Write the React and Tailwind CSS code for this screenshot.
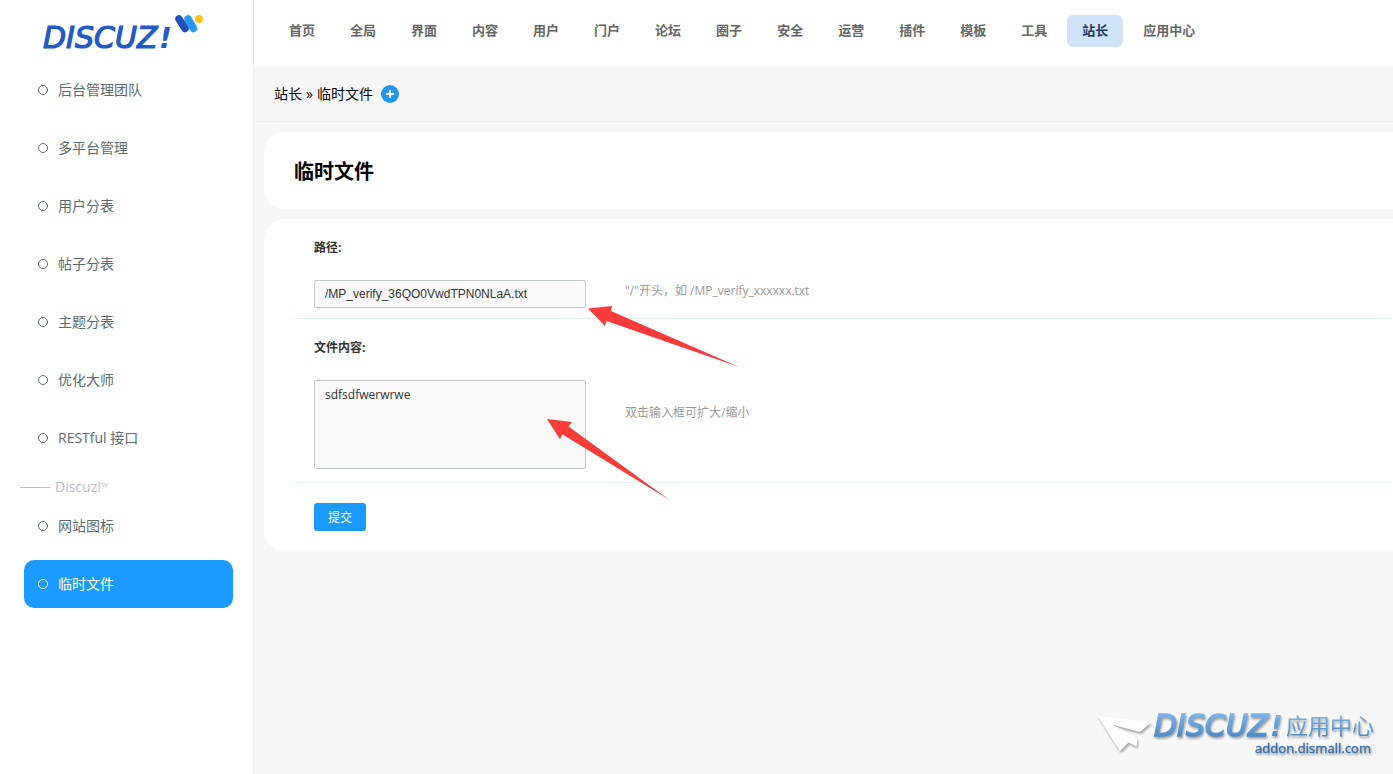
import clsx from 'clsx';

const topMenu = [
  '首页', '全局', '界面', '内容', '用户', '门户', '论坛', '圈子',
  '安全', '运营', '插件', '模板', '工具', '站长', '应用中心',
];

const sideMenu = [
  '后台管理团队',
  '多平台管理',
  '用户分表',
  '帖子分表',
  '主题分表',
  '优化大师',
  'RESTful 接口',
];

const witframeMenu = ['网站图标', '临时文件'];

const current = { top: '站长', side: '临时文件' };

function Wordmark({ x, y, color, weight }) {
  return (
    <g
      fontFamily="DejaVu Sans"
      fontStyle="italic"
      fill={color}
      stroke={color}
      strokeWidth={weight}
    >
      <text x={x} y={y} fontSize="30">DISCUZ</text>
      <text x={x + 116} y={y} fontSize="28" fontWeight="bold" strokeWidth="0">!</text>
    </g>
  );
}

function Logo() {
  return (
    <svg viewBox="0 0 164 50" className="w-[164px] h-[50px]" role="img" aria-label="Discuz! W">
      <Wordmark x={2} y={36} color="#2259c9" weight="1.2" />
      <g strokeLinecap="round" strokeWidth="7.5">
        <path d="M147 7l5.5 9.5" stroke="#2799f3" />
        <path d="M138 7l6 9.5" stroke="#1f4fb8" />
      </g>
      <circle cx="158" cy="7" r="4" fill="#fcc21b" />
    </svg>
  );
}

function SideItem({ label }) {
  const active = label === current.side;
  return (
    <li>
      <a
        href="#"
        className={clsx(
          'flex items-center gap-2.5 h-12 px-3.5 rounded-[10px] text-sm',
          active ? 'bg-[#1b9aff] text-white' : 'text-[#5d6a70]',
        )}
      >
        <span className="size-2.5 rounded-full border border-current" />
        {label}
      </a>
    </li>
  );
}

function Sidebar() {
  return (
    <aside className="w-[254px] shrink-0 bg-white border-r border-[#eeeeee]">
      <div className="h-[66px] pt-3 pl-[41px]">
        <Logo />
      </div>
      <nav className="pl-6 pr-5">
        <ul className="flex flex-col gap-2.5">
          {sideMenu.map((label) => (
            <SideItem key={label} label={label} />
          ))}
        </ul>
        <div className="-ml-1 mt-[15px] mb-[5px] flex items-center gap-[5px] h-5 text-sm text-[#b9bdcb]">
          <span className="w-[30px] border-t border-current" />
          <span>
            Discuz!<span className="font-['DejaVu_Serif',serif]">ʷ</span>
          </span>
        </div>
        <ul className="flex flex-col gap-2.5">
          {witframeMenu.map((label) => (
            <SideItem key={label} label={label} />
          ))}
        </ul>
      </nav>
    </aside>
  );
}

function TopNav() {
  return (
    <nav className="h-[66px] pt-[15px] pl-5 bg-white">
      <ul className="flex gap-[5px]">
        {topMenu.map((label) => (
          <li key={label}>
            <a
              href="#"
              className={clsx(
                'block px-[15px] pb-0.5 rounded-md text-[13px] leading-[30px] font-bold whitespace-nowrap',
                label === current.top ? 'bg-[#d0e3f9] text-[#1c3a5e]' : 'text-[#666666]',
              )}
            >
              {label}
            </a>
          </li>
        ))}
      </ul>
    </nav>
  );
}

function Breadcrumb() {
  return (
    <div className="flex items-center gap-2 h-14 pl-5 border-b border-[#eeeeee] text-sm text-black">
      <div className="flex gap-1">
        <a href="#">站长</a>
        <span>»</span>
        <span>临时文件</span>
      </div>
      <button type="button" aria-label="添加常用操作" className="size-[18px]">
        <svg viewBox="0 0 18 18" className="size-[18px]">
          <circle cx="9" cy="9" r="9" fill="#2196f3" />
          <path d="M9 5v8M5 9h8" stroke="#fff" strokeWidth="2" />
        </svg>
      </button>
    </div>
  );
}

function Arrow({ points, className }) {
  return (
    <svg viewBox="0 0 152 82" className={clsx('absolute w-[152px] h-[82px] pointer-events-none', className)}>
      <polygon points={points} fill="#f93b39" />
    </svg>
  );
}

function SettingForm() {
  const row = 'px-5 border-b border-dotted border-[#d6e0e4]';
  const title = 'block pt-[19px] pb-[17px] leading-5 font-bold text-[#333333]';
  const field = 'block w-68 px-2.5 rounded-xs border border-[#c6c9cc] bg-[#f9f9f9] text-[#333333]';
  return (
    <form className="pl-[30px] pr-0.5 rounded-l-[20px] bg-white text-xs">
      <div className={clsx(row, 'pb-2.5')}>
        <label htmlFor="path" className={title}>
          路径:
        </label>
        <div className="flex pt-[5px]">
          <div className="relative w-[311px]">
            <input
              id="path"
              type="text"
              defaultValue="/MP_verify_36QO0VwdTPN0NLaA.txt"
              className={clsx(field, "h-7 font-['Liberation_Sans',sans-serif] text-xs")}
            />
            <Arrow
              className="left-[273px] top-6"
              points="1,4.5 25,2 24,7 152,63 19.5,17 18,22"
            />
          </div>
          <p className="leading-[22px] text-[#999999]">"/"开头，如 /MP_verify_xxxxxx.txt</p>
        </div>
      </div>

      <div className={clsx(row, 'pb-[13px]')}>
        <label htmlFor="content" className={title}>
          文件内容:
        </label>
        <div className="flex pt-[5px]">
          <div className="relative w-[311px]">
            <textarea
              id="content"
              defaultValue="sdfsdfwerwrwe"
              className={clsx(field, 'h-[89px] py-1 resize-none text-xs leading-5')}
            />
            <Arrow
              className="left-[232px] top-[38px]"
              points="1,1 26,4 22.5,8.5 123.5,82 16.3,16.3 14,21.3"
            />
          </div>
          <p className="pt-[22px] leading-[22px] text-[#999999]">双击输入框可扩大/缩小</p>
        </div>
      </div>

      <div className="p-5">
        <button type="submit" className="h-7 px-3.5 pt-0.5 rounded-[3px] bg-[#1b9aff] text-white">
          提交
        </button>
      </div>
    </form>
  );
}

function AddonMark() {
  return (
    <a
      href="#"
      aria-label="Discuz! 应用中心 addon.dismall.com"
      className="absolute right-2 bottom-2"
    >
      <svg viewBox="0 0 290 58" className="w-[290px] h-[58px] drop-shadow-[1px_2px_1px_rgba(0,0,0,0.35)]">
        <defs>
          <linearGradient id="mark" gradientUnits="userSpaceOnUse" x1="0" y1="6" x2="0" y2="30">
            <stop offset="0" stopColor="#7db4e6" />
            <stop offset="1" stopColor="#4a88c4" />
          </linearGradient>
        </defs>
        <path d="M2 7.5l54 7-11 9.5-26.5-7 24 14-1 7.5-8-4-8.5 8.5z" fill="#fff" />
        <Wordmark x={59} y={28} color="url(#mark)" weight="1.6" />
        <text x="191" y="26" fontFamily="Noto Sans CJK SC" fontSize="22" fill="url(#mark)">
          应用中心
        </text>
        <text
          x="160"
          y="45"
          fontFamily="Noto Sans"
          fontSize="13"
          fill="#3f76ad"
          stroke="#3f76ad"
          strokeWidth="0.4"
        >
          addon.dismall.com
        </text>
      </svg>
    </a>
  );
}

export default function App() {
  return (
    <div className="relative flex min-h-screen bg-[#f7f7f7] font-['Open_Sans','Noto_Sans_CJK_SC',sans-serif]">
      <Sidebar />
      <div className="flex-1 min-w-0">
        <TopNav />
        <Breadcrumb />
        <main className="flex flex-col gap-2.5 pt-2.5 pl-2.5">
          <h1 className="pt-[25px] pb-[23px] pl-[30px] rounded-l-[20px] bg-white text-xl leading-[29px] font-bold text-black">
            临时文件
          </h1>
          <SettingForm />
        </main>
      </div>
      <AddonMark />
    </div>
  );
}
